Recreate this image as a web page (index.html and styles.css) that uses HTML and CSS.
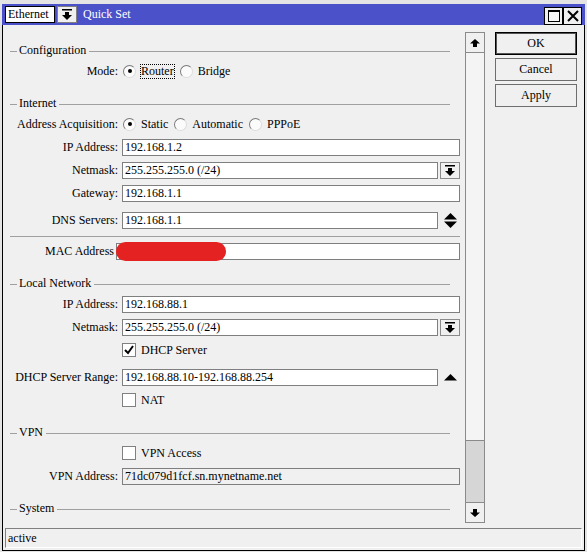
FILE: index.html
```html
<!DOCTYPE html>
<html>
<head>
<meta charset="utf-8">
<title>Quick Set</title>
<link rel="stylesheet" href="styles.css">
</head>
<body>
<div class="window">
  <div class="titlebar">
    <div class="mode-select">Ethernet</div>
    <div class="mode-btn">
      <svg width="10" height="11" viewBox="0 0 10 11"><rect x="0" y="0" width="10" height="1.5"/><rect x="3" y="3" width="4" height="3"/><polygon points="0,6 10,6 5,11"/></svg>
    </div>
    <div class="title">Quick Set</div>
    <div class="spacer"></div>
    <div class="tb-btn"><span class="max-icon"></span></div>
    <div class="tb-btn close">
      <svg width="12" height="12" viewBox="0 0 12 12"><path d="M1 1 L11 11 M11 1 L1 11" stroke="#000" stroke-width="2" fill="none"/></svg>
    </div>
  </div>
  <div class="body">
    <div class="main">
      <div class="form">
        <div class="legend mt17"><span>Configuration</span></div>
        <div class="row tall mt7">
          <div class="lbl">Mode:</div>
          <div class="opts">
            <span class="radio on"></span><span class="opt-text focus">Router</span>
            <span class="radio"></span><span class="opt-text">Bridge</span>
          </div>
        </div>

        <div class="legend mt18"><span>Internet</span></div>
        <div class="row tall mt7">
          <div class="lbl">Address Acquisition:</div>
          <div class="opts">
            <span class="radio on"></span><span class="opt-text">Static</span>
            <span class="radio"></span><span class="opt-text">Automatic</span>
            <span class="radio"></span><span class="opt-text">PPPoE</span>
          </div>
        </div>
        <div class="row mt8">
          <div class="lbl">IP Address:</div>
          <div class="field">192.168.1.2</div>
        </div>
        <div class="row mt6">
          <div class="lbl">Netmask:</div>
          <div class="field short">255.255.255.0 (/24)</div>
          <div class="dd"><svg width="10" height="11" viewBox="0 0 10 11"><rect x="0" y="0" width="10" height="1.5"/><rect x="3" y="3" width="4" height="3"/><polygon points="0,6 10,6 5,11"/></svg></div>
        </div>
        <div class="row mt6">
          <div class="lbl">Gateway:</div>
          <div class="field">192.168.1.1</div>
        </div>
        <div class="row mt10">
          <div class="lbl">DNS Servers:</div>
          <div class="field short">192.168.1.1</div>
          <div class="spin"><svg width="13" height="15" viewBox="0 0 13 15"><polygon points="6.5,0 13,6.5 0,6.5"/><polygon points="0,8.5 13,8.5 6.5,15"/></svg></div>
        </div>
        <div class="sep mt7"></div>
        <div class="row mt6">
          <div class="lbl mac">MAC Address</div>
          <div class="field mac"><span class="redact"></span></div>
        </div>

        <div class="legend mt16"><span>Local Network</span></div>
        <div class="row mt6">
          <div class="lbl">IP Address:</div>
          <div class="field">192.168.88.1</div>
        </div>
        <div class="row mt6">
          <div class="lbl">Netmask:</div>
          <div class="field short">255.255.255.0 (/24)</div>
          <div class="dd"><svg width="10" height="11" viewBox="0 0 10 11"><rect x="0" y="0" width="10" height="1.5"/><rect x="3" y="3" width="4" height="3"/><polygon points="0,6 10,6 5,11"/></svg></div>
        </div>
        <div class="row tall mt7">
          <span class="chk on"><svg width="12" height="12" viewBox="0 0 12 12"><path d="M2 6 L5 9 L10 2" stroke="#000" stroke-width="2" fill="none"/></svg></span>
          <span class="chk-text">DHCP Server</span>
        </div>
        <div class="row mt12">
          <div class="lbl">DHCP Server Range:</div>
          <div class="field short">192.168.88.10-192.168.88.254</div>
          <div class="spin"><svg width="13" height="7" viewBox="0 0 13 7"><polygon points="6.5,0 13,6.5 0,6.5"/></svg></div>
        </div>
        <div class="row tall mt7">
          <span class="chk"></span>
          <span class="chk-text">NAT</span>
        </div>

        <div class="legend mt18"><span>VPN</span></div>
        <div class="row tall mt7">
          <span class="chk"></span>
          <span class="chk-text">VPN Access</span>
        </div>
        <div class="row mt8">
          <div class="lbl">VPN Address:</div>
          <div class="field disabled">71dc079d1fcf.sn.mynetname.net</div>
        </div>

        <div class="legend mt16"><span>System</span></div>
      </div>
      <div class="scrollbar">
        <div class="sb-btn up"><svg width="10" height="8" viewBox="0 0 10 8"><polygon points="5,0 10,4.5 7,4.5 7,8 3,8 3,4.5 0,4.5"/></svg></div>
        <div class="sb-track"></div>
        <div class="sb-thumb"></div>
        <div class="sb-btn down"><svg width="10" height="8" viewBox="0 0 10 8"><polygon points="3,0 7,0 7,3.5 10,3.5 5,8 0,3.5 3,3.5"/></svg></div>
      </div>
      <div class="buttons">
        <div class="btn default">OK</div>
        <div class="btn">Cancel</div>
        <div class="btn">Apply</div>
      </div>
    </div>
    <div class="status">active</div>
  </div>
</div>
</body>
</html>
```

FILE: styles.css
```css
html, body {
  margin: 0;
  padding: 0;
}
body {
  width: 587px;
  height: 552px;
  overflow: hidden;
  background: #e4e4e4;
  font-family: "Liberation Serif", "Times New Roman", serif;
  font-size: 12px;
  color: #000;
}
.window {
  margin: 4px 0 0 2px;
  width: 583px;
}
.titlebar {
  height: 21px;
  background: #4b51c8;
  display: flex;
  align-items: flex-start;
}
.mode-select {
  margin: 2px 0 0 3px;
  width: 50px;
  height: 17px;
  box-sizing: border-box;
  border: 1px solid #000;
  background: #fff;
  padding-left: 2px;
  line-height: 15px;
  white-space: nowrap;
}
.mode-btn {
  margin: 2px 0 0 2px;
  width: 20px;
  height: 17px;
  box-sizing: border-box;
  border: 1px solid #808080;
  background: #f0f0f0;
  display: flex;
  align-items: center;
  justify-content: center;
}
.title {
  margin-left: 6px;
  line-height: 21px;
  color: #fff;
}
.spacer {
  flex: 1;
}
.tb-btn {
  margin-top: 3px;
  width: 19px;
  height: 18px;
  box-sizing: border-box;
  border: 1px solid #000;
  background: #f0f0f0;
  display: flex;
  align-items: center;
  justify-content: center;
}
.tb-btn.close {
  margin-right: 3px;
}
.max-icon {
  width: 12px;
  height: 12px;
  box-sizing: border-box;
  border: 1px solid #000;
  border-top-width: 2px;
  background: #f8f8f8;
}
.body {
  height: 526px;
  box-sizing: border-box;
  border: 1px solid #000;
  border-top: 0;
  background: #f0f0f0;
}
.main {
  display: flex;
  height: 498px;
}
.form {
  width: 462px;
  height: 498px;
  overflow: hidden;
  padding-left: 7px;
  box-sizing: border-box;
  flex-shrink: 0;
  padding-top: 1px;
}
.mt6 { margin-top: 6px; }
.mt7 { margin-top: 7px; }
.mt8 { margin-top: 8px; }
.mt10 { margin-top: 10px; }
.mt12 { margin-top: 12px; }
.mt16 { margin-top: 16px; }
.mt17 { margin-top: 17px; }
.mt18 { margin-top: 18px; }

.legend {
  display: flex;
  align-items: flex-start;
  height: 14px;
  width: 440px;
  line-height: 14px;
}
.legend::before {
  content: "";
  width: 7px;
  flex-shrink: 0;
  margin-top: 8px;
  border-top: 1px solid #a0a0a0;
}
.legend::after {
  content: "";
  flex: 1;
  margin-top: 8px;
  border-top: 1px solid #a0a0a0;
}
.legend span {
  padding: 0 3px 0 2px;
  white-space: nowrap;
}
.sep {
  width: 450px;
  height: 0;
  border-top: 1px solid #a0a0a0;
}
.row {
  display: flex;
  align-items: center;
  height: 17px;
}
.row.tall {
  height: 14px;
}
.lbl {
  width: 108px;
  flex-shrink: 0;
  margin-right: 4px;
  text-align: right;
  white-space: nowrap;
}
.lbl.mac {
  width: 104px;
  margin-right: 2px;
}
.field {
  width: 338px;
  height: 17px;
  box-sizing: border-box;
  border: 1px solid #7f7f7f;
  background: #fff;
  padding-left: 2px;
  line-height: 15px;
  white-space: nowrap;
  overflow: hidden;
  flex-shrink: 0;
}
.field.short {
  width: 316px;
}
.field.mac {
  width: 344px;
  position: relative;
  overflow: visible;
}
.field.disabled {
  background: #f0f0f0;
}
.redact {
  position: absolute;
  left: -1px;
  top: -2px;
  width: 110px;
  height: 19px;
  border-radius: 10px;
  background: #e52222;
}
.dd {
  margin-left: 2px;
  width: 20px;
  height: 17px;
  box-sizing: border-box;
  border: 1px solid #8a8a8a;
  background: #f0f0f0;
  display: flex;
  align-items: center;
  justify-content: center;
}
.spin {
  margin-left: 6px;
  display: flex;
  align-items: center;
}
.opts {
  display: flex;
  align-items: center;
  margin-left: 1px;
}
.radio {
  width: 13px;
  height: 13px;
  box-sizing: border-box;
  border-radius: 50%;
  border: 1px solid;
  border-color: #7a7a7a #dcdcdc #dcdcdc #7a7a7a;
  background: #fbfbfb;
  display: flex;
  align-items: center;
  justify-content: center;
  flex-shrink: 0;
}
.radio.on::after {
  content: "";
  width: 4px;
  height: 4px;
  border-radius: 50%;
  background: #000;
}
.opt-text {
  margin-left: 5px;
  margin-right: 6px;
  white-space: nowrap;
  line-height: 13px;
}
.focus {
  outline: 1px dotted #000;
}
.chk {
  margin-left: 112px;
  width: 14px;
  height: 14px;
  box-sizing: border-box;
  border: 1px solid #808080;
  background: #fff;
  display: flex;
  align-items: center;
  justify-content: center;
  flex-shrink: 0;
}
.chk-text {
  margin-left: 5px;
  white-space: nowrap;
}
.scrollbar {
  margin-top: 7px;
  width: 20px;
  height: 491px;
  box-sizing: border-box;
  border: 1px solid #8a8a8a;
  display: flex;
  flex-direction: column;
  background: #f4f4f4;
  flex-shrink: 0;
}
.sb-btn {
  height: 19px;
  background: #f0f0f0;
  display: flex;
  align-items: center;
  justify-content: center;
  flex-shrink: 0;
}
.sb-btn.up {
  border-bottom: 1px solid #8a8a8a;
}
.sb-btn.down {
  border-top: 1px solid #8a8a8a;
}
.sb-track {
  flex: 1;
}
.sb-thumb {
  height: 62px;
  box-sizing: border-box;
  border-top: 1px solid #8a8a8a;
  background: #d6d6d6;
  flex-shrink: 0;
}
.buttons {
  margin: 7px 0 0 10px;
  width: 82px;
  display: flex;
  flex-direction: column;
  gap: 3px;
}
.btn {
  height: 23px;
  box-sizing: border-box;
  border: 1px solid #6e6e6e;
  background: #f0f0f0;
  text-align: center;
  line-height: 21px;
}
.btn.default {
  border-color: #000;
  box-shadow: inset 0 0 0 1px #555;
}
.status {
  margin: 5px 2px 0 2px;
  height: 20px;
  box-sizing: border-box;
  border-top: 1px solid #808080;
  border-left: 1px solid #808080;
  border-right: 1px solid #fff;
  border-bottom: 1px solid #fff;
  padding-left: 2px;
  line-height: 18px;
}
```
